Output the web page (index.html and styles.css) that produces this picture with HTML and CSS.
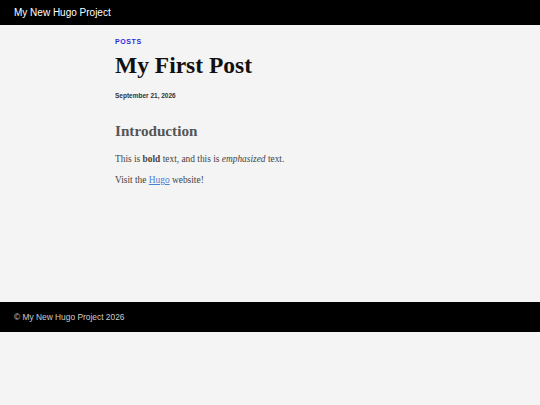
FILE: index.html
```html
<!DOCTYPE html>
<html lang="en">
<head>
<meta charset="utf-8">
<title>My First Post | My New Hugo Project</title>
<link rel="stylesheet" href="styles.css">
</head>
<body>
<header class="site-header">My New Hugo Project</header>
<main class="site-main">
  <article class="post">
    <div class="post-section">Posts</div>
    <h1 class="post-title">My First Post</h1>
    <time class="post-date">September 21, 2026</time>
    <h2 class="post-heading">Introduction</h2>
    <p class="post-text">This is <strong>bold</strong> text, and this is <em>emphasized</em> text.</p>
    <p class="post-text">Visit the <a class="post-link" href="#">Hugo</a> website!</p>
  </article>
</main>
<footer class="site-footer">© My New Hugo Project 2026</footer>
</body>
</html>
```
FILE: styles.css
```css
html, body {
  margin: 0;
  padding: 0;
  background: #f4f4f4;
}
body {
  font-family: "Liberation Serif", serif;
}
.site-header {
  background: #000;
  color: #fff;
  font-family: "Liberation Sans", Arial, sans-serif;
  font-size: 10px;
  height: 25px;
  line-height: 25px;
  padding: 0 14px;
}
.site-main {
  height: 277px;
  box-sizing: border-box;
  padding: 13px 0 0 115px;
}
.post {
  display: flex;
  flex-direction: column;
  align-items: flex-start;
}
.post-section {
  font-family: "Liberation Sans", Arial, sans-serif;
  font-weight: bold;
  font-size: 7px;
  letter-spacing: 0.6px;
  text-transform: uppercase;
  color: #2c2cdc;
  line-height: 8px;
}
.post-title {
  margin: 5px 0 0 0;
  font-size: 23.5px;
  line-height: 28px;
  color: #111;
}
.post-date {
  margin-top: 13px;
  font-family: "Liberation Sans", Arial, sans-serif;
  font-size: 6.5px;
  font-weight: bold;
  color: #333;
  line-height: 8px;
}
.post-heading {
  margin: 22px 0 0 0;
  font-size: 15.2px;
  line-height: 18px;
  color: #555;
}
.post-text {
  margin: 13px 0 0 0;
  font-size: 9.4px;
  line-height: 12px;
  color: #444;
}
.post-text + .post-text {
  margin-top: 9px;
}
.post-link {
  color: #4a80d8;
}
.site-footer {
  background: #000;
  color: #ccc;
  font-family: "Liberation Sans", Arial, sans-serif;
  font-size: 8.4px;
  height: 30px;
  line-height: 30px;
  padding: 0 14px;
}
```
